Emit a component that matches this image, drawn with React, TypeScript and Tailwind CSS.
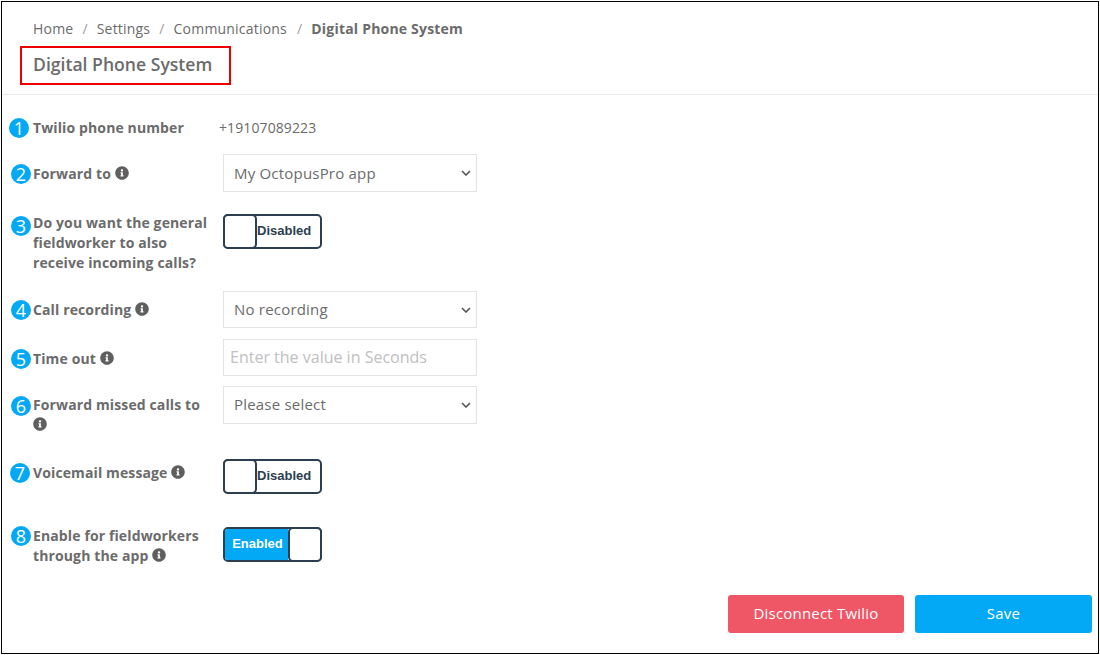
import { ReactNode } from "react";
import { FaInfoCircle } from "react-icons/fa";

const font = { fontFamily: '"Open Sans", sans-serif' };

function Info({ className = "" }: { className?: string }) {
  return <FaInfoCircle className={`inline-block text-[14px] text-[#5f5f5f] align-[-1px] ${className}`} />;
}

/** Blue numbered marker laid over the label's left edge. */
function Marker({ n, className }: { n: number; className: string }) {
  return (
    <span
      className={`absolute flex h-[20px] w-[20px] items-center justify-center rounded-full bg-[#03a9f4] text-[18px] leading-none font-normal tracking-normal text-white ${className}`}
    >
      {n}
    </span>
  );
}

function Row({ label, children, className }: { label: ReactNode; children: ReactNode; className: string }) {
  return (
    <div className={`flex items-start ${className}`}>
      <div className="relative mr-[12px] ml-[31px] w-[178px] shrink-0 text-[14px] leading-[20px] font-bold tracking-[0.12px] text-[#6b6b6b]">
        {label}
      </div>
      {children}
    </div>
  );
}

function Select({ value, className = "h-[38px]", inner = "" }: { value: string; className?: string; inner?: string }) {
  return (
    <div className={`relative w-[254px] ${className}`}>
      <select
        defaultValue={value}
        className={`h-full w-full appearance-none border border-[#e4e4e4] bg-white pl-[10px] text-[15px] tracking-[0.2px] text-[#6b6b6b] outline-none ${inner}`}
      >
        <option>{value}</option>
      </select>
      <svg viewBox="0 0 10 6" className="pointer-events-none absolute top-[16px] right-[6px] h-[6px] w-[10px]" fill="none">
        <path d="M1 1l4 4 4-4" stroke="#555555" strokeWidth="1.6" />
      </svg>
    </div>
  );
}

function Toggle({ on }: { on?: boolean }) {
  return (
    <div
      className="flex h-[35px] w-[99px] rounded-[5px] border-2 border-[#2d3e50] text-[13px] font-bold"
      style={{ fontFamily: '"Liberation Sans", sans-serif' }}
    >
      {on ? (
        <>
          <span className="flex w-[63px] items-center justify-center rounded-l-[3px] bg-[#03a9f4] pb-[2px] pl-[2px] text-white">Enabled</span>
          <span className="my-[-2px] mr-[-2px] flex-1 rounded-[5px] border-2 border-[#2d3e50] bg-white" />
        </>
      ) : (
        <>
          <span className="my-[-2px] ml-[-2px] w-[34px] rounded-[5px] border-2 border-[#2d3e50] bg-white" />
          <span className="flex flex-1 items-center pb-[2px] text-[#2d3e50]">Disabled</span>
        </>
      )}
    </div>
  );
}

export default function App() {
  return (
    <div style={font} className="h-[655px] w-[1100px] overflow-hidden bg-white p-[1px]">
      <div className="h-[653px] w-[1098px] border border-black">
        <div className="h-[93px] border-b border-[#e8e8e8] pt-[17px]">
          <div className="ml-[31px] flex items-center text-[14px] leading-[20px] tracking-[0.2px] text-[#6b6b6b]">
            <span>Home</span>
            <span className="mx-[9px] text-[#a0a0a0]">/</span>
            <span>Settings</span>
            <span className="mx-[9px] text-[#a0a0a0]">/</span>
            <span>Communications</span>
            <span className="mr-[9px] ml-[10px] text-[#a0a0a0]">/</span>
            <span className="font-bold">Digital Phone System</span>
          </div>
          <div className="mt-[7px] ml-[18px] flex h-[39px] w-[211px] items-center border-2 border-[#ee0000] pb-[2px] pl-[11px] text-[17.6px] font-semibold text-[#6b6b6b]">
            Digital Phone System
          </div>
        </div>

        <Row
          className="mt-[23px]"
          label={
            <>
              <Marker n={1} className="top-0 left-[-24px]" />
              Twilio phone number
            </>
          }
        >
          <span className="ml-[-4px] text-[14px] leading-[20px] tracking-[0.1px] text-[#6b6b6b]">+19107089223</span>
        </Row>

        <Row
          className="mt-[16px]"
          label={
            <>
              <Marker n={2} className="top-[10px] left-[-22px]" />
              <div className="mt-[10px]">
                Forward to <Info />
              </div>
            </>
          }
        >
          <Select value="My OctopusPro app" />
        </Row>

        <Row
          className="mt-[22px]"
          label={
            <>
              <Marker n={3} className="top-[2px] left-[-22px]" />
              <div className="mt-[-1px]">Do you want the general fieldworker to also receive incoming calls?</div>
            </>
          }
        >
          <Toggle />
        </Row>

        <Row
          className="mt-[18px]"
          label={
            <>
              <Marker n={4} className="top-[9px] left-[-22px]" />
              <div className="mt-[9px]">
                Call recording <Info />
              </div>
            </>
          }
        >
          <Select value="No recording" className="h-[37px]" />
        </Row>

        <Row
          className="mt-[11px]"
          label={
            <>
              <Marker n={5} className="top-[10px] left-[-22px]" />
              <div className="mt-[10px]">
                Time out <Info />
              </div>
            </>
          }
        >
          <input
            placeholder="Enter the value in Seconds"
            className="h-[37px] w-[254px] border border-[#e4e4e4] bg-white px-[6px] pb-[2px] text-[16px] text-[#6b6b6b] outline-none placeholder:text-[#c0c0c0]"
          />
        </Row>

        <Row
          className="mt-[10px]"
          label={
            <>
              <Marker n={6} className="top-[10px] left-[-22px]" />
              <div className="mt-[9px]">
                Forward missed calls to <Info />
              </div>
            </>
          }
        >
          <Select value="Please select" inner="pb-[2px]" />
        </Row>

        <Row
          className="mt-[24px]"
          label={
            <>
              <Marker n={7} className="top-[4px] left-[-23px]" />
              <div className="mt-[4px]">
                Voicemail message <Info />
              </div>
            </>
          }
        >
          <Toggle />
        </Row>

        <Row
          className="mt-[33px]"
          label={
            <>
              <Marker n={8} className="top-[-1px] left-[-22px]" />
              <div className="mt-[-1px]">
                Enable for fieldworkers through the app <Info />
              </div>
            </>
          }
        >
          <Toggle on />
        </Row>

        <div className="mt-[29px] flex justify-end gap-[11px] pr-[6px]">
          <button className="h-[38px] w-[176px] rounded-[3px] bg-[#ef5666] pb-[1px] text-[15px] tracking-[0.2px] text-white">
            Disconnect Twilio
          </button>
          <button className="h-[38px] w-[177px] rounded-[3px] bg-[#03a9f4] pb-[1px] text-[15px] tracking-[0.2px] text-white">
            Save
          </button>
        </div>
      </div>
    </div>
  );
}
